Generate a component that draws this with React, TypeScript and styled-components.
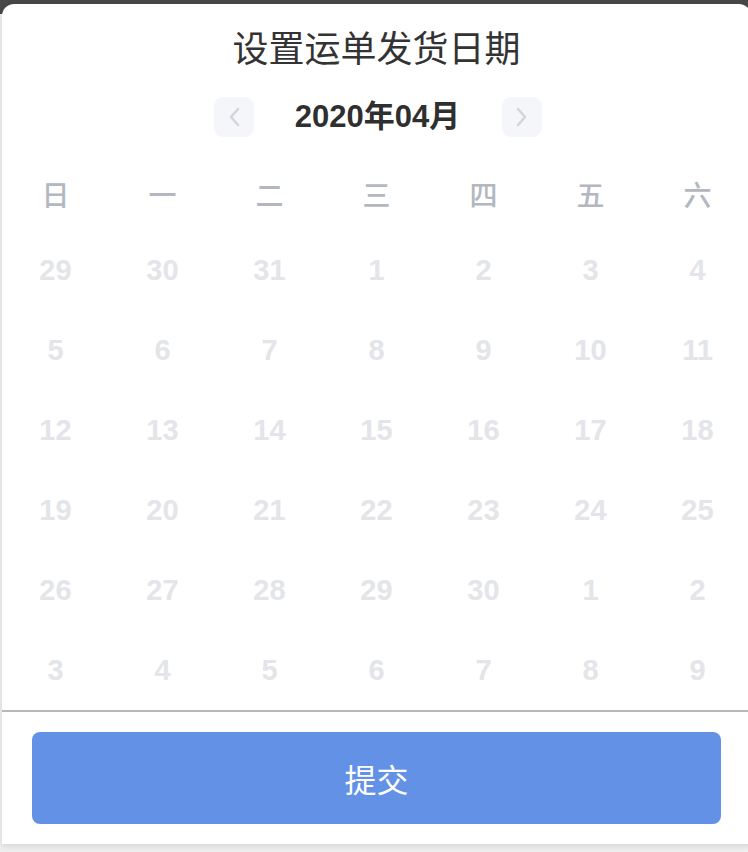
import styled, { createGlobalStyle } from 'styled-components'

const GlobalStyle = createGlobalStyle`
  html, body {
    margin: 0;
    padding: 0;
  }
  body {
    font-family: "Liberation Sans", "Noto Sans CJK SC", sans-serif;
    background: #efefef;
  }
`

// ---- Styled Components ----
const Page = styled.div`
  width: 748px;
  height: 852px;
  overflow: hidden;
  background: linear-gradient(#474747 0 14px, #efefef 14px);
  padding-top: 4px;
  padding-left: 2px;
  box-sizing: border-box;
`

const Sheet = styled.div`
  width: 749px;
  flex-shrink: 0;
  height: 840px;
  background: #fff;
  border-radius: 12px 12px 0 0;
  box-shadow: 0 2px 6px rgba(0, 0, 0, 0.12);
  display: flex;
  flex-direction: column;
`

const Title = styled.h1`
  margin: 0;
  padding-top: 26px;
  line-height: 40px;
  font-size: 36px;
  font-weight: 400;
  color: #333;
  text-align: center;
`

const NavRow = styled.div`
  display: flex;
  justify-content: center;
  align-items: center;
  margin-top: 26px;
  padding-left: 2px;
`

const NavButton = styled.button`
  width: 40px;
  height: 40px;
  border: none;
  border-radius: 9px;
  background: #f5f6fa;
  display: flex;
  align-items: center;
  justify-content: center;
  padding: 0;
  cursor: pointer;
`

const MonthLabel = styled.div`
  width: 248px;
  text-align: center;
  font-size: 31px;
  font-weight: 700;
  color: #2f2f2f;
  line-height: 42px;
`

const Grid = styled.div`
  display: grid;
  grid-template-columns: repeat(7, 1fr);
  margin-top: 20px;
`

const WeekCell = styled.div`
  height: 72px;
  display: flex;
  align-items: center;
  justify-content: center;
  font-size: 28px;
  font-weight: 500;
  color: #b3b8c0;
`

const DayCell = styled.div`
  height: 80px;
  display: flex;
  align-items: center;
  justify-content: center;
  font-size: 29px;
  font-weight: 700;
  color: #e3e5e9;
`

const Divider = styled.div`
  height: 2px;
  background: #b8b8b8;
`

const Footer = styled.div`
  padding: 20px 30px 0 30px;
`

const SubmitButton = styled.button`
  width: 100%;
  height: 92px;
  border: none;
  border-radius: 8px;
  background: #6291e6;
  color: #fff;
  font-family: inherit;
  font-size: 32px;
  cursor: pointer;
`

const WEEKDAYS = ['日', '一', '二', '三', '四', '五', '六']

const DAYS = [
  29, 30, 31, 1, 2, 3, 4,
  5, 6, 7, 8, 9, 10, 11,
  12, 13, 14, 15, 16, 17, 18,
  19, 20, 21, 22, 23, 24, 25,
  26, 27, 28, 29, 30, 1, 2,
  3, 4, 5, 6, 7, 8, 9,
]

const Chevron = ({ dir }: { dir: 'left' | 'right' }) => (
  <svg width="14" height="22" viewBox="0 0 14 22" fill="none">
    <path
      d={dir === 'left' ? 'M11 3 L4 11 L11 19' : 'M3 3 L10 11 L3 19'}
      stroke="#d3d5db"
      strokeWidth="2.6"
      strokeLinecap="round"
      strokeLinejoin="round"
    />
  </svg>
)

// ---- Component ----
export default function App() {
  return (
    <>
      <GlobalStyle />
      <Page>
        <Sheet>
          <Title>设置运单发货日期</Title>
          <NavRow>
            <NavButton aria-label="上个月">
              <Chevron dir="left" />
            </NavButton>
            <MonthLabel>2020年04月</MonthLabel>
            <NavButton aria-label="下个月">
              <Chevron dir="right" />
            </NavButton>
          </NavRow>
          <Grid>
            {WEEKDAYS.map((w) => (
              <WeekCell key={w}>{w}</WeekCell>
            ))}
            {DAYS.map((d, i) => (
              <DayCell key={i}>{d}</DayCell>
            ))}
          </Grid>
          <Divider />
          <Footer>
            <SubmitButton>提交</SubmitButton>
          </Footer>
        </Sheet>
      </Page>
    </>
  )
}
